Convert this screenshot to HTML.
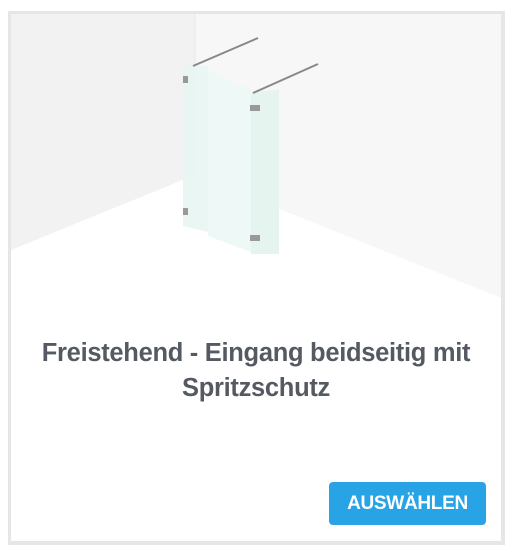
<!DOCTYPE html>
<html><head><style>
body{margin:0;width:511px;height:554px;background:#fff;font-family:"Liberation Sans",sans-serif;overflow:hidden}
.card{position:absolute;left:8px;top:11px;width:490px;height:527px;border:3px solid #e6e6e6;border-right-width:4px;border-bottom-width:4px;background:#fff}
.t{position:absolute;left:-20px;right:-20px;top:322px;text-align:center;font-weight:bold;font-size:25.5px;line-height:35px;color:#555a62;letter-spacing:-0.3px}
.b{position:absolute;left:318px;top:468px;width:157px;height:43px;background:#28a3e5;border-radius:4px;color:#fff;font-weight:bold;font-size:19px;line-height:43px;text-align:center;letter-spacing:-0.3px}
</style></head><body>
<div class="card">
<svg width="490" height="300" style="position:absolute;left:0;top:0">
<polygon points="0,0 184,0 184,161 0,236" fill="#f2f2f2"/>
<polygon points="184,0 490,0 490,284 184,161" fill="#f7f7f7"/>
<line x1="184" y1="0" x2="184" y2="161" stroke="#e8e8e8"/>
<polygon points="172,52 197,52 197,218 172,212" fill="#e8f5f2" opacity=".9"/>
<polygon points="197,56 240,76 240,238 197,222" fill="#eef8f6"/>
<polygon points="240,78 268,76 268,240 240,240" fill="#e6f4f0"/>
<line x1="182" y1="52" x2="247" y2="24" stroke="#888" stroke-width="2"/>
<line x1="242" y1="79" x2="307" y2="50" stroke="#888" stroke-width="2"/>
<rect x="172" y="62" width="5" height="7" fill="#999"/>
<rect x="172" y="194" width="5" height="7" fill="#999"/>
<rect x="239" y="91" width="10" height="6" fill="#999"/>
<rect x="239" y="221" width="10" height="6" fill="#999"/>
</svg>
<div class="t">Freistehend - Eingang beidseitig mit<br>Spritzschutz</div>
<div class="b">AUSWÄHLEN</div>
</div>
</body></html>
